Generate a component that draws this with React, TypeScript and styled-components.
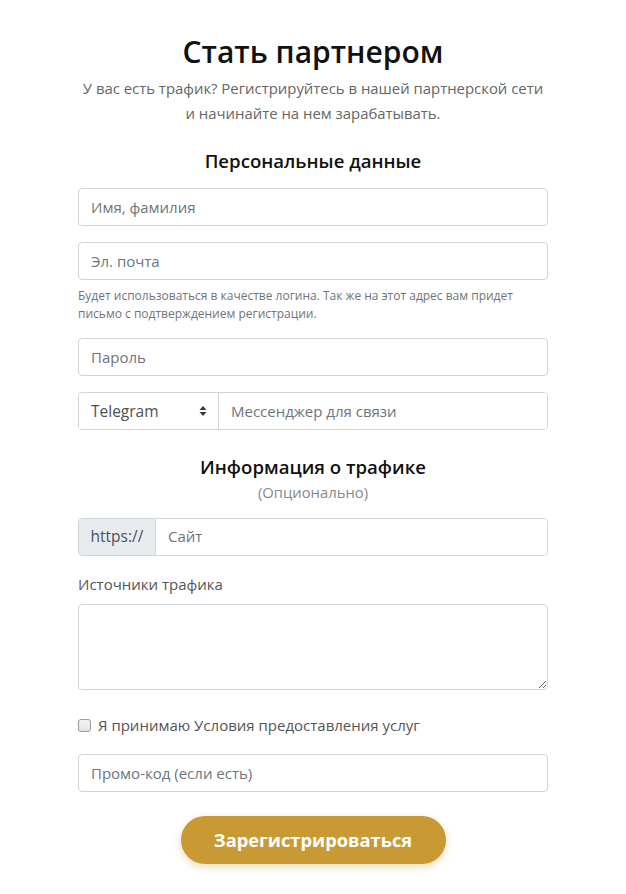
import React from "react";
import styled, { createGlobalStyle } from "styled-components";

const Global = createGlobalStyle`
  * { box-sizing: border-box; }
  body {
    margin: 0;
    background: #fff;
    font-family: "Open Sans", "Noto Sans", sans-serif;
    font-size: 15px;
    line-height: 1.5;
    color: #495057;
  }
`;

const Page = styled.div`
  width: 470px;
  margin: 0 auto;
  padding: 33px 0 26px;
`;

const Title = styled.h1`
  margin: 0 0 5px;
  text-align: center;
  font-size: 30px;
  font-weight: 600;
  line-height: 38px;
  color: #111;
`;

const Lead = styled.p`
  margin: 0 -30px 23px;
  text-align: center;
  font-size: 14.9px;
  line-height: 25px;
  color: #666;
  white-space: nowrap;
`;

const SectionTitle = styled.h2<{ $tight?: boolean }>`
  margin: 0 0 ${(p) => (p.$tight ? "2px" : "15px")};
  text-align: center;
  font-size: 18.6px;
  font-weight: 600;
  line-height: 1.3;
  color: #111;
`;

const Optional = styled.div`
  text-align: center;
  font-size: 14.8px;
  color: #888;
  margin: 0 0 14px;
`;

const Field = styled.div<{ $mb?: number }>`
  margin-bottom: ${(p) => (p.$mb ?? 16)}px;
`;

const Input = styled.input`
  display: block;
  width: 100%;
  height: 38px;
  padding: 6px 12px;
  font: inherit;
  font-size: 15px;
  color: #495057;
  background: #fff;
  border: 1px solid #ced4da;
  border-radius: 4px;
  outline: none;
  &::placeholder { color: #6c757d; opacity: 1; }
`;

const Help = styled.small`
  display: block;
  margin-top: 7px;
  font-size: 12px;
  line-height: 18px;
  color: #6c757d;
`;

const Group = styled.div`
  display: flex;
  height: 38px;
  border: 1px solid #ced4da;
  border-radius: 4px;
  overflow: hidden;
`;

const SelectBox = styled.div`
  position: relative;
  width: 140px;
  flex: none;
  border-right: 1px solid #ced4da;
`;

const Select = styled.select`
  appearance: none;
  width: 100%;
  height: 100%;
  border: 0;
  padding: 0 12px;
  font: inherit;
  font-size: 15.5px;
  color: #495057;
  background: #fff;
  outline: none;
`;

const Caret = styled.svg`
  position: absolute;
  right: 11px;
  top: 50%;
  transform: translateY(-50%);
  pointer-events: none;
`;

const Addon = styled.span`
  flex: none;
  width: 77px;
  display: flex;
  align-items: center;
  justify-content: center;
  background: #e9ecef;
  border-right: 1px solid #ced4da;
  font-size: 15.5px;
  color: #495057;
`;

const GroupInput = styled.input`
  flex: 1;
  min-width: 0;
  border: 0;
  padding: 0 12px;
  font: inherit;
  font-size: 15px;
  color: #495057;
  outline: none;
  &::placeholder { color: #6c757d; opacity: 1; }
`;

const Label = styled.label`
  display: block;
  font-size: 15px;
  color: #555;
  margin-bottom: 9px;
`;

const Area = styled.textarea`
  display: block;
  width: 100%;
  height: 86px;
  border: 1px solid #ced4da;
  border-radius: 4px;
  padding: 6px 12px;
  font: inherit;
  outline: none;
`;

const Check = styled.label`
  display: flex;
  align-items: center;
  gap: 7px;
  font-size: 15px;
  color: #555;
  margin-bottom: 17px;
`;

const Box = styled.input`
  appearance: none;
  margin: 0;
  width: 13px;
  height: 13px;
  border: 1px solid #9a9a9a;
  border-radius: 3px;
  background: linear-gradient(#f4f4f4, #e2e2e2);
  &:checked {
    background: #c99a34;
    border-color: #b0852a;
  }
`;

const Submit = styled.button`
  display: block;
  margin: 24px auto 0;
  width: 265px;
  height: 48px;
  border: 0;
  border-radius: 24px;
  background: #c99a34;
  color: #fff;
  font-family: inherit;
  font-size: 18.3px;
  font-weight: 700;
  box-shadow: 0 3px 8px rgba(201, 154, 52, 0.35);
  cursor: pointer;
`;

export default function App() {
  return (
    <>
      <Global />
      <Page>
        <Title>Стать партнером</Title>
        <Lead>
          У вас есть трафик? Регистрируйтесь в нашей партнерской сети
          <br />и начинайте на нем зарабатывать.
        </Lead>
        <SectionTitle>Персональные данные</SectionTitle>
        <Field>
          <Input placeholder="Имя, фамилия" />
        </Field>
        <Field $mb={15}>
          <Input placeholder="Эл. почта" />
          <Help>
            Будет использоваться в качестве логина. Так же на этот адрес вам придет
            <br />
            письмо с подтверждением регистрации.
          </Help>
        </Field>
        <Field>
          <Input type="password" placeholder="Пароль" />
        </Field>
        <Field $mb={25}>
          <Group>
            <SelectBox>
              <Select defaultValue="tg">
                <option value="tg">Telegram</option>
                <option value="wa">WhatsApp</option>
                <option value="sk">Skype</option>
              </Select>
              <Caret width="8" height="12" viewBox="0 0 8 12">
                <path d="M4 1 L7.5 5 H0.5 Z M4 11 L0.5 7 H7.5 Z" fill="#343a40" />
              </Caret>
            </SelectBox>
            <GroupInput placeholder="Мессенджер для связи" />
          </Group>
        </Field>
        <SectionTitle $tight>Информация о трафике</SectionTitle>
        <Optional>(Опционально)</Optional>
        <Field $mb={17}>
          <Group>
            <Addon>https://</Addon>
            <GroupInput placeholder="Сайт" />
          </Group>
        </Field>
        <Label>Источники трафика</Label>
        <Field $mb={24}>
          <Area />
        </Field>
        <Check>
          <Box type="checkbox" />
          Я принимаю Условия предоставления услуг
        </Check>
        <Field $mb={0}>
          <Input placeholder="Промо-код (если есть)" />
        </Field>
        <Submit type="button">Зарегистрироваться</Submit>
      </Page>
    </>
  );
}
